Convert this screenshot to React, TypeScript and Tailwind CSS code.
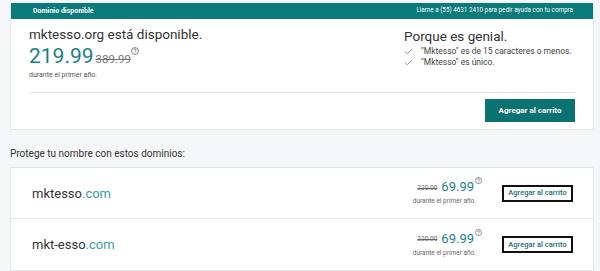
import React from "react";

const teal = "text-[#1a7f84]";

function Help({ size = 8 }: { size?: number }) {
  return (
    <svg width={size} height={size} viewBox="0 0 10 10" className="inline-block align-top">
      <circle cx="5" cy="5" r="4.3" fill="none" stroke="#555" strokeWidth="0.9" />
      <path d="M3.6 3.9a1.4 1.4 0 1 1 2 1.3c-.45.2-.6.45-.6.9" fill="none" stroke="#555" strokeWidth="0.9" />
      <circle cx="5" cy="7.4" r="0.5" fill="#555" />
    </svg>
  );
}

function Check() {
  return (
    <svg width="9" height="7" viewBox="0 0 9 7" className="shrink-0">
      <path d="M1 3.6l2.3 2.2L8 1" fill="none" stroke="#8a9aa0" strokeWidth="1" />
    </svg>
  );
}

function DomainRow({ name, last }: { name: string; last?: boolean }) {
  return (
    <div className={`flex items-center h-[51px] pl-[21px] pr-[20px] ${last ? "" : "border-b border-[#e3e4e6]"}`}>
      <div className="flex-1 text-[13px] text-[#333] leading-none">
        {name}
        <span className="text-[#3d9ca1]">.com</span>
      </div>
      <div className="flex flex-col items-end mr-[20px]">
        <div className="flex items-end leading-none">
          <span className="text-[6.5px] text-[#666] line-through mr-[4px] mb-[2px]">220.00</span>
          <span className={`text-[13px] ${teal}`}>69.99</span>
          <span className="ml-[1px] -mt-[2px] self-start">
            <Help size={7} />
          </span>
        </div>
        <div className="text-[6.5px] text-[#666] mt-[4px] mr-[6px]">durante el primer año.</div>
      </div>
      <button className="border-2 border-[#111] h-[17px] w-[71px] text-[7.5px] text-[#1b6f73] font-medium leading-none">
        Agregar al carrito
      </button>
    </div>
  );
}

export default function App() {
  return (
    <div
      className="w-[600px] h-[271px] overflow-hidden bg-[#f5f6f8] pt-[3px] pl-[10px] pr-[6px]"
      style={{ fontFamily: "Roboto, 'Liberation Sans', sans-serif" }}
    >
      <section className="bg-white border border-[#e6e7e9] border-t-0">
        <div className="h-[16px] bg-[#0b7a7b] flex items-center justify-between pl-[22px] pr-[20px] text-white">
          <span className="text-[7px] font-bold">Dominio disponible</span>
          <span className="text-[6.3px]">Llame a (55) 4631 2410 para pedir ayuda con tu compra</span>
        </div>
        <div className="px-[18px]">
          <div className="flex justify-between pt-[7px] h-[74px] border-b border-[#e3e4e6]">
            <div>
              <h1 className="text-[13.5px] text-[#333] leading-[17px]">mktesso.org está disponible.</h1>
              <div className="flex items-end leading-none mt-[3px]">
                <span className={`text-[21px] ${teal}`}>219.99</span>
                <span className="text-[11.5px] text-[#777] line-through ml-[2px] mb-[2px]">389.99</span>
                <span className="self-start mt-[1px]">
                  <Help size={8} />
                </span>
              </div>
              <p className="text-[7px] text-[#555] mt-[3px]">durante el primer año.</p>
            </div>
            <div className="w-[171px] pt-[2px]">
              <h2 className="text-[13.5px] text-[#333] leading-[16px]">Porque es genial.</h2>
              <ul className="mt-[2px] text-[8.5px] text-[#444] leading-[11px]">
                <li className="flex items-center gap-[8px]">
                  <Check />
                  <span>"Mktesso" es de 15 caracteres o menos.</span>
                </li>
                <li className="flex items-center gap-[8px]">
                  <Check />
                  <span>"Mktesso" es único.</span>
                </li>
              </ul>
            </div>
          </div>
          <div className="flex justify-end pt-[6px] pb-[7px]">
            <button className="bg-[#0b7272] text-white text-[8px] font-bold w-[90px] h-[23px]">
              Agregar al carrito
            </button>
          </div>
        </div>
      </section>
      <p className="text-[10px] text-[#333] mt-[18px] mb-[7px] leading-[12px]">Protege tu nombre con estos dominios:</p>
      <section className="bg-white border border-[#e6e7e9]">
        <DomainRow name="mktesso" />
        <DomainRow name="mkt-esso" last />
      </section>
    </div>
  );
}
